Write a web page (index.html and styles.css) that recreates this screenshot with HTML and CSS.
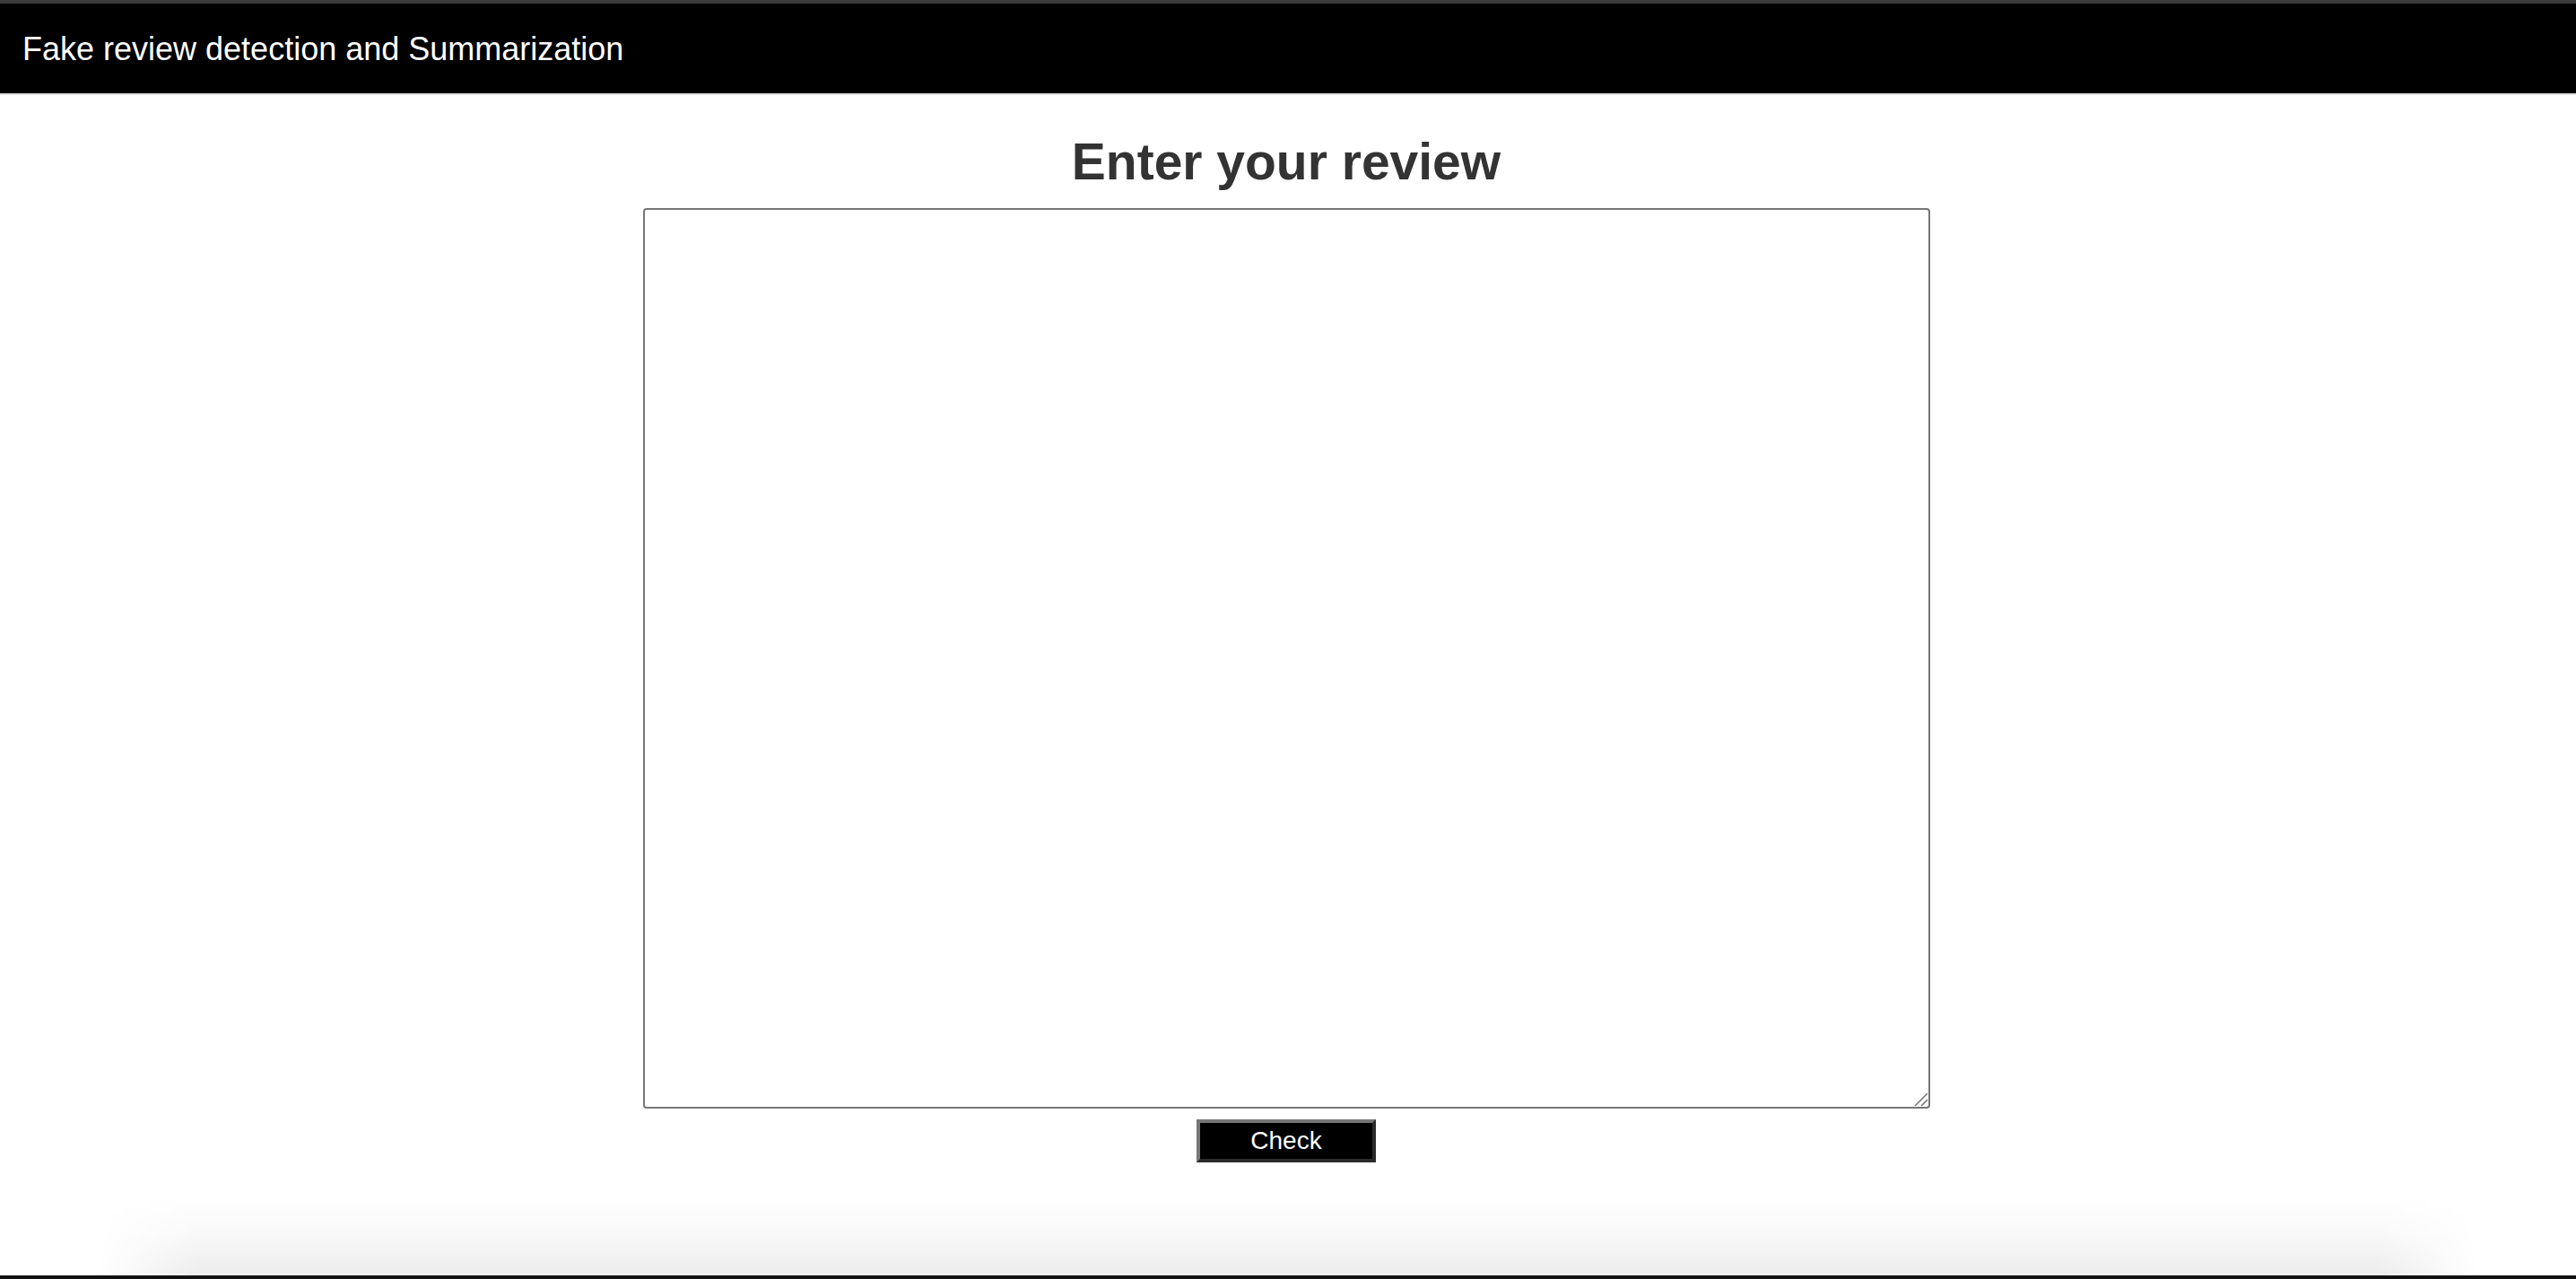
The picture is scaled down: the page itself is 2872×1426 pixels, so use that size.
FILE: index.html
```html
<!DOCTYPE html>
<html lang="en">
<head>
<meta charset="utf-8">
<title>Fake review detection and Summarization</title>
<link rel="stylesheet" href="styles.css">
</head>
<body>
  <header class="topbar">
    <span class="brand">Fake review detection and Summarization</span>
  </header>
  <main class="content">
    <h1 class="title">Enter your review</h1>
    <form class="review-form" onsubmit="return false;">
      <div class="field">
        <textarea class="review-input" name="review"></textarea>
        <svg class="grip" width="16" height="16" viewBox="0 0 16 16" aria-hidden="true">
          <line x1="1" y1="15" x2="15" y2="1" />
          <line x1="8" y1="15" x2="15" y2="8" />
        </svg>
      </div>
      <button class="check-btn" type="submit">Check</button>
    </form>
  </main>
  <div class="fade"></div>
</body>
</html>
```
FILE: styles.css
```css
html {
  background: #fff;
}

body {
  margin: 0;
  height: 1426px;
  box-sizing: border-box;
  border-top: 4px solid #3a3a3a;
  border-bottom: 4px solid #111;
  display: flex;
  flex-direction: column;
  overflow: hidden;
  font-family: "Liberation Sans", Arial, Helvetica, sans-serif;
  background: #fff;
}

.topbar {
  flex: none;
  height: 100px;
  background: #000;
  border-bottom: 2px solid #dedede;
  display: flex;
  align-items: center;
  padding-left: 25px;
}

.brand {
  color: #fff;
  font-size: 36px;
  line-height: 41px;
}

.content {
  flex: none;
  display: flex;
  flex-direction: column;
  align-items: center;
  padding-right: 4px;
}

.title {
  margin: 41px 0 19px;
  font-size: 57px;
  line-height: 66px;
  font-weight: bold;
  color: #333;
}

.review-form {
  display: flex;
  flex-direction: column;
  align-items: center;
}

.field {
  position: relative;
}

.review-input {
  display: block;
  box-sizing: border-box;
  width: 1435px;
  height: 1004px;
  margin: 0;
  padding: 4px;
  border: 2px solid #767676;
  border-radius: 4px;
  background: #fff;
  font-family: "Liberation Sans", Arial, sans-serif;
  font-size: 26px;
  resize: none;
}

.grip {
  position: absolute;
  right: 2px;
  bottom: 2px;
  stroke: #767676;
  stroke-width: 1.6;
}

.check-btn {
  margin-top: 12px;
  box-sizing: border-box;
  width: 200px;
  height: 48px;
  padding: 0;
  background: #000;
  color: #fff;
  font-family: "Liberation Sans", Arial, sans-serif;
  font-size: 28px;
  border-style: solid;
  border-width: 4px;
  border-color: #767676 #2b2b2b #2b2b2b #767676;
  cursor: pointer;
}

.fade {
  flex: none;
  margin: auto 110px 0;
  height: 86px;
  background: linear-gradient(to bottom, rgba(0, 0, 0, 0), rgba(0, 0, 0, 0.025) 45%, rgba(0, 0, 0, 0.075));
  -webkit-mask-image: linear-gradient(to right, transparent, #000 110px, #000 calc(100% - 110px), transparent);
  mask-image: linear-gradient(to right, transparent, #000 110px, #000 calc(100% - 110px), transparent);
}
```
